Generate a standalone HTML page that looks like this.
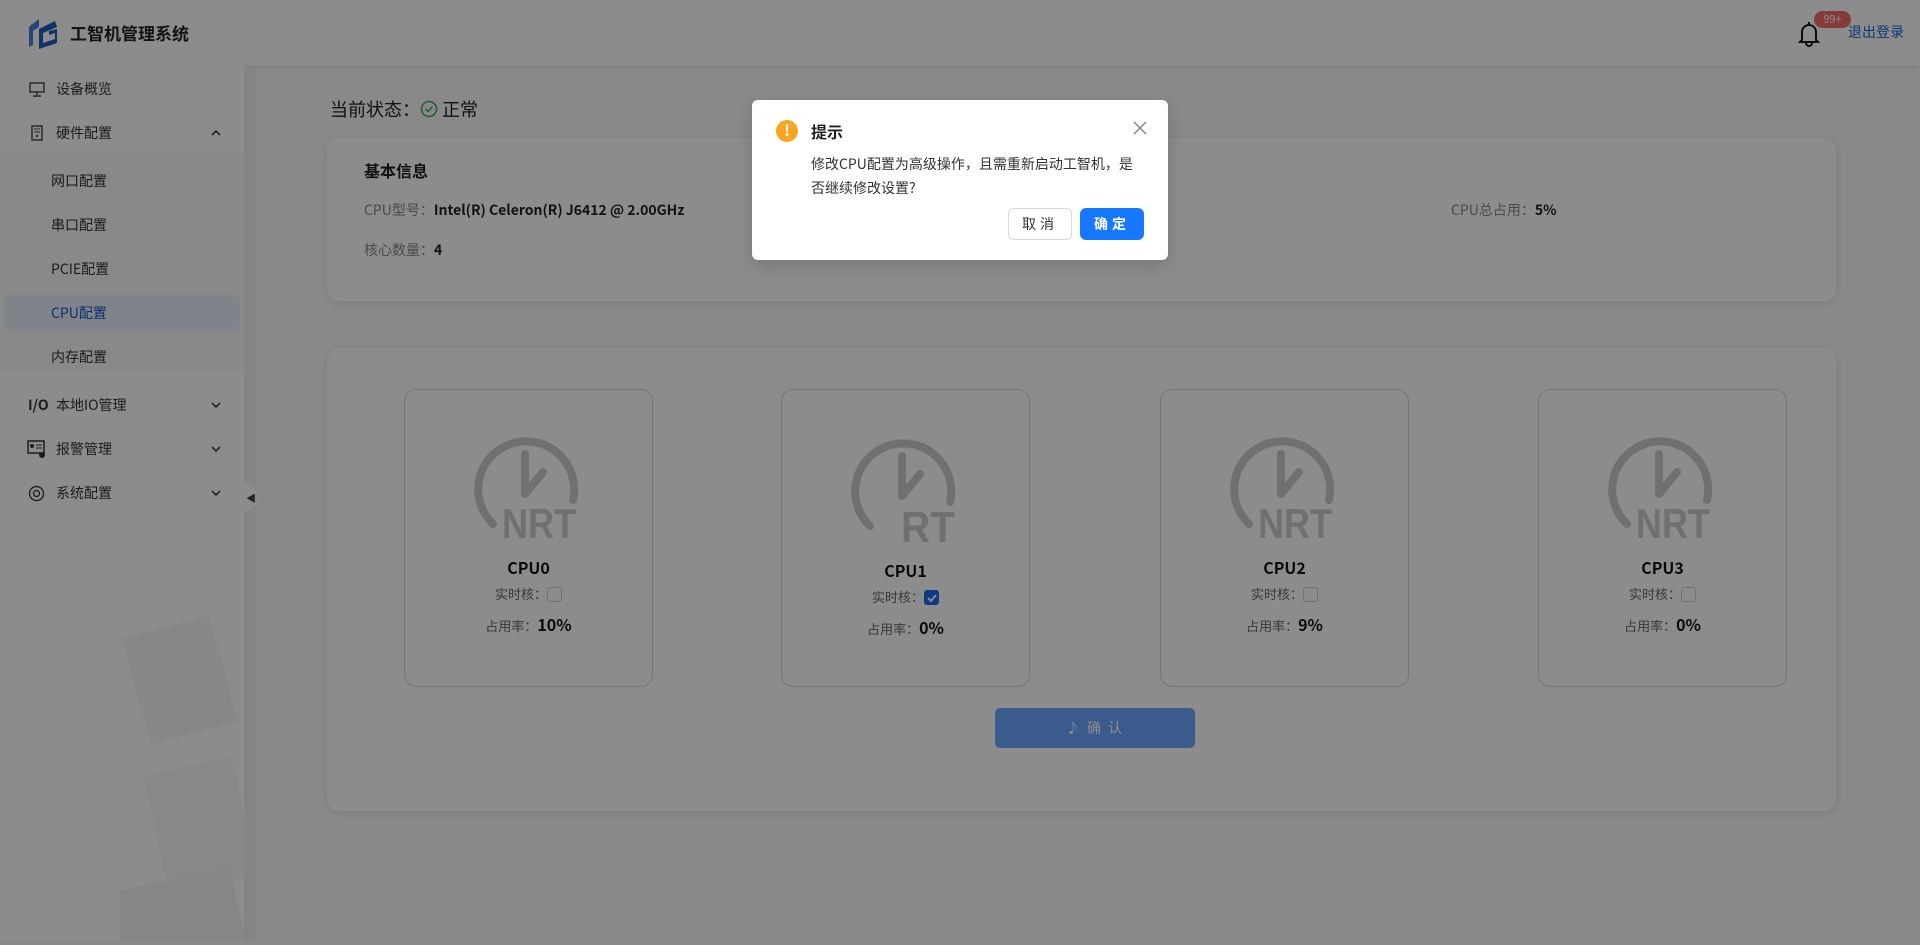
<!DOCTYPE html>
<html><head><meta charset="utf-8">
<style>
*{margin:0;padding:0;box-sizing:border-box}
body{width:1920px;height:945px;overflow:hidden;position:relative;background:#fafafa;font-family:"Noto Sans CJK SC","Liberation Sans",sans-serif;color:#333}
.abs{position:absolute}
.hdr{left:0;top:0;width:1920px;height:65px;background:#fff;box-shadow:0 2px 6px rgba(0,0,0,.08)}
.side{left:0;top:65px;width:244px;height:876px;background:#fff;overflow:hidden}
.strip{left:244px;top:65px;width:12px;height:876px;background:#f0f0f0}
.mi{position:absolute;left:0;width:244px;height:36px;line-height:36px;font-size:14px;color:#333}
.mi .t{position:absolute;left:56px}
.mi .s{position:absolute;left:51px}
.mi .ar{position:absolute;left:211px;top:14px}
.card{background:#fff;border-radius:12px;box-shadow:0 2px 10px rgba(0,0,0,.1)}
.cpu{position:absolute;top:389px;width:249px;height:298px;border:1px solid #d8d8d8;border-radius:12px;background:#fff;text-align:center}
.cpu svg.ic{position:absolute;left:64px;top:40px}
.cpu .n{position:absolute;left:0;right:0;top:165px;font-size:16px;font-weight:bold;color:#111}
.cpu .r1{position:absolute;left:0;right:0;top:194px;font-size:13px;color:#666}
.cpu .r2{position:absolute;left:0;right:0;top:222px;font-size:13px;color:#666}
.cpu .r2 b{font-size:16px;color:#111}
.cb{display:inline-block;width:15px;height:15px;border:1px solid #ccc;border-radius:3px;vertical-align:-3px;background:#fff}
.mask{left:0;top:0;width:1920px;height:945px;background:rgba(0,0,0,.45)}
.dlg{left:752px;top:100px;width:416px;height:160px;background:#fff;border-radius:6px;box-shadow:0 6px 16px rgba(0,0,0,.15)}
</style></head><body>
<div class="abs hdr">
  <svg class="abs" style="left:27px;top:17px" width="32" height="34" viewBox="0 0 32 34">
    <path d="M4 8 L12 2 L12 10 L6 14 L6 28 L2 30 L2 10Z" fill="#4a7fd4"/>
    <path d="M12 12 L28 4 L30 10 L16 16 L16 26 L28 22 L28 16 L22 18 L22 14 L30 12 L30 26 L12 32Z" fill="#1f5bbf"/>
  </svg>
  <div class="abs" style="left:70px;top:20px;font-size:17px;font-weight:bold;color:#222">工智机管理系统</div>
  <svg class="abs" style="left:1797px;top:20px" width="24" height="28" viewBox="0 0 24 28"><path d="M12 2v2M5 20V12a7 7 0 0 1 14 0v8l2 2H3z M9 23a3 3 0 0 0 6 0" fill="none" stroke="#000" stroke-width="1.8"/></svg>
  <div class="abs" style="left:1814px;top:11px;width:37px;height:17px;border-radius:9px;background:#f56c6c;color:#fff;font-size:11px;line-height:17px;text-align:center">99+</div>
  <div class="abs" style="left:1848px;top:22px;font-size:14px;color:#1565d8">退出登录</div>
</div>
<div class="abs side">
  <svg class="abs" style="left:120px;top:520px" width="130" height="360"><g><rect x="15" y="40" width="90" height="110" transform="rotate(-15 60 95)" fill="#f6f6f6"/><rect x="35" y="180" width="90" height="120" transform="rotate(-12 80 240)" fill="#f8f8f8"/><rect x="-60" y="300" width="180" height="80" transform="rotate(-12 30 340)" fill="#f4f4f4"/></g></svg>
  <div class="mi" style="top:6px"><svg class="abs" style="left:29px;top:11px" width="16" height="15"><rect x="1" y="1" width="14" height="9" fill="none" stroke="#444" stroke-width="1.4"/><path d="M8 10v3M4 14h8" stroke="#444" stroke-width="1.4"/></svg><span class="t">设备概览</span></div>
  <div class="mi" style="top:50px;background:#fff"><svg class="abs" style="left:31px;top:10px" width="12" height="16"><rect x="1" y="1" width="10" height="14" fill="none" stroke="#444" stroke-width="1.4"/><path d="M3 4h6M3 7h6" stroke="#444"/><circle cx="6" cy="11" r="1.2" fill="#444"/></svg><span class="t">硬件配置</span><svg class="ar" width="10" height="8"><path d="M1 6l4-4 4 4" fill="none" stroke="#444" stroke-width="1.6"/></svg></div>
  <div style="position:absolute;left:0;top:86px;width:244px;height:220px;background:#fafafa"></div>
  <div class="mi" style="top:98px"><span class="s">网口配置</span></div>
  <div class="mi" style="top:142px"><span class="s">串口配置</span></div>
  <div class="mi" style="top:186px"><span class="s">PCIE配置</span></div>
  <div class="mi" style="top:230px;left:4px;width:236px;background:#e8f0fc;border-radius:6px;color:#1a55c8"><span class="s" style="left:47px">CPU配置</span></div>
  <div class="mi" style="top:274px"><span class="s">内存配置</span></div>
  <div class="mi" style="top:322px"><span class="abs" style="left:28px;font-weight:bold;font-size:14px">I/O</span><span class="t">本地IO管理</span><svg class="ar" width="10" height="8"><path d="M1 2l4 4 4-4" fill="none" stroke="#444" stroke-width="1.6"/></svg></div>
  <div class="mi" style="top:366px"><svg class="abs" style="left:27px;top:9px" width="20" height="19"><rect x="1" y="1" width="16" height="12" fill="none" stroke="#333" stroke-width="1.5"/><circle cx="5" cy="6" r="2" fill="#333"/><path d="M9 5h6M9 8h6" stroke="#333"/><circle cx="15" cy="15" r="3" fill="#333"/></svg><span class="t">报警管理</span><svg class="ar" width="10" height="8"><path d="M1 2l4 4 4-4" fill="none" stroke="#444" stroke-width="1.6"/></svg></div>
  <div class="mi" style="top:410px"><svg class="abs" style="left:28px;top:10px" width="17" height="17"><circle cx="8.5" cy="8.5" r="7" fill="none" stroke="#444" stroke-width="1.4"/><circle cx="8.5" cy="8.5" r="3" fill="none" stroke="#444" stroke-width="1.4"/></svg><span class="t">系统配置</span><svg class="ar" width="10" height="8"><path d="M1 2l4 4 4-4" fill="none" stroke="#444" stroke-width="1.6"/></svg></div>
</div>
<div class="abs strip"></div>
<div class="abs" style="left:244px;top:482px;width:14px;height:30px;background:#fff;border-radius:0 14px 14px 0"></div>
<div class="abs" style="left:246px;top:490px;font-size:10px;color:#444">◀</div>

<div class="abs" style="left:330px;top:96px;font-size:18px;color:#222">当前状态：<svg style="vertical-align:-2px" width="18" height="18"><circle cx="9" cy="9" r="7.5" fill="none" stroke="#3aa655" stroke-width="1.5"/><path d="M5.5 9l2.5 2.5 4.5-5" fill="none" stroke="#3aa655" stroke-width="1.5"/></svg> 正常</div>
<div class="abs card" style="left:327px;top:138px;width:1509px;height:163px"></div>
<div class="abs" style="left:364px;top:158px;font-size:16px;font-weight:bold;color:#222">基本信息</div>
<div class="abs" style="left:364px;top:200px;font-size:14px;color:#888">CPU型号：<b style="color:#222">Intel(R) Celeron(R) J6412 @ 2.00GHz</b></div>
<div class="abs" style="left:1451px;top:200px;font-size:14px;color:#888">CPU总占用：<b style="color:#222">5%</b></div>
<div class="abs" style="left:364px;top:240px;font-size:14px;color:#888">核心数量：<b style="color:#222">4</b></div>

<div class="abs card" style="left:327px;top:348px;width:1509px;height:463px"></div>
<svg width="0" height="0" style="position:absolute"><defs><g id="g"><path d="M24 94 A48 48 0 1 1 104 70" fill="none" stroke="#ccc" stroke-width="8" stroke-linecap="round"/><path d="M56 24 V64 L74 42" fill="none" stroke="#ccc" stroke-width="8" stroke-linecap="round" stroke-linejoin="round"/></g></defs></svg>
<div class="cpu" style="left:404px"><svg class="ic" width="120" height="110" viewBox="0 0 120 110"><use href="#g"/><text x="33" y="108" font-family="Liberation Sans" font-weight="bold" font-size="42" textLength="74" lengthAdjust="spacingAndGlyphs" fill="#ccc">NRT</text></svg><div class="n">CPU0</div><div class="r1">实时核：<span class="cb"></span></div><div class="r2">占用率：<b>10%</b></div></div>
<div class="cpu" style="left:781px"><svg class="ic" width="120" height="110" viewBox="0 0 120 110" style="top:42px"><use href="#g"/><text x="55" y="110" font-family="Liberation Sans" font-weight="bold" font-size="44" textLength="54" lengthAdjust="spacingAndGlyphs" fill="#ccc">RT</text></svg><div class="n" style="top:168px">CPU1</div><div class="r1" style="top:197px">实时核：<span class="cb" style="background:#1a6bef;border-color:#1a6bef;position:relative"><svg style="position:absolute;left:1px;top:1px" width="12" height="12"><path d="M2 6l3 3 5-6" fill="none" stroke="#fff" stroke-width="2"/></svg></span></div><div class="r2" style="top:225px">占用率：<b>0%</b></div></div>
<div class="cpu" style="left:1160px"><svg class="ic" width="120" height="110" viewBox="0 0 120 110"><use href="#g"/><text x="33" y="108" font-family="Liberation Sans" font-weight="bold" font-size="42" textLength="74" lengthAdjust="spacingAndGlyphs" fill="#ccc">NRT</text></svg><div class="n">CPU2</div><div class="r1">实时核：<span class="cb"></span></div><div class="r2">占用率：<b>9%</b></div></div>
<div class="cpu" style="left:1538px"><svg class="ic" width="120" height="110" viewBox="0 0 120 110"><use href="#g"/><text x="33" y="108" font-family="Liberation Sans" font-weight="bold" font-size="42" textLength="74" lengthAdjust="spacingAndGlyphs" fill="#ccc">NRT</text></svg><div class="n">CPU3</div><div class="r1">实时核：<span class="cb"></span></div><div class="r2">占用率：<b>0%</b></div></div>
<div class="abs" style="left:995px;top:708px;width:200px;height:40px;border-radius:5px;background:#6ca6ff;color:#fff;text-align:center;line-height:40px;font-size:14px;letter-spacing:2px">♪ 确 认</div>

<div class="abs mask"></div>
<div class="abs dlg">
  <div class="abs" style="left:24px;top:20px;width:22px;height:22px;border-radius:50%;background:#f5a623;color:#fff;text-align:center;line-height:22px;font-weight:bold;font-size:15px">!</div>
  <div class="abs" style="left:59px;top:19px;font-size:16px;font-weight:bold;color:#222">提示</div>
  <svg class="abs" style="left:381px;top:21px" width="14" height="14"><path d="M1 1l12 12M13 1L1 13" stroke="#888" stroke-width="1.5"/></svg>
  <div class="abs" style="left:59px;top:52px;width:330px;font-size:14px;line-height:24px;color:#333">修改CPU配置为高级操作，且需重新启动工智机，是否继续修改设置?</div>
  <div class="abs" style="left:256px;top:108px;width:64px;height:32px;border:1px solid #d9d9d9;border-radius:6px;text-align:center;line-height:30px;font-size:14px;color:#333;letter-spacing:4px">取消</div>
  <div class="abs" style="left:328px;top:108px;width:64px;height:32px;background:#1677ff;border-radius:6px;text-align:center;line-height:32px;font-size:14px;color:#fff;letter-spacing:4px;font-weight:bold">确定</div>
</div>
</body></html>
